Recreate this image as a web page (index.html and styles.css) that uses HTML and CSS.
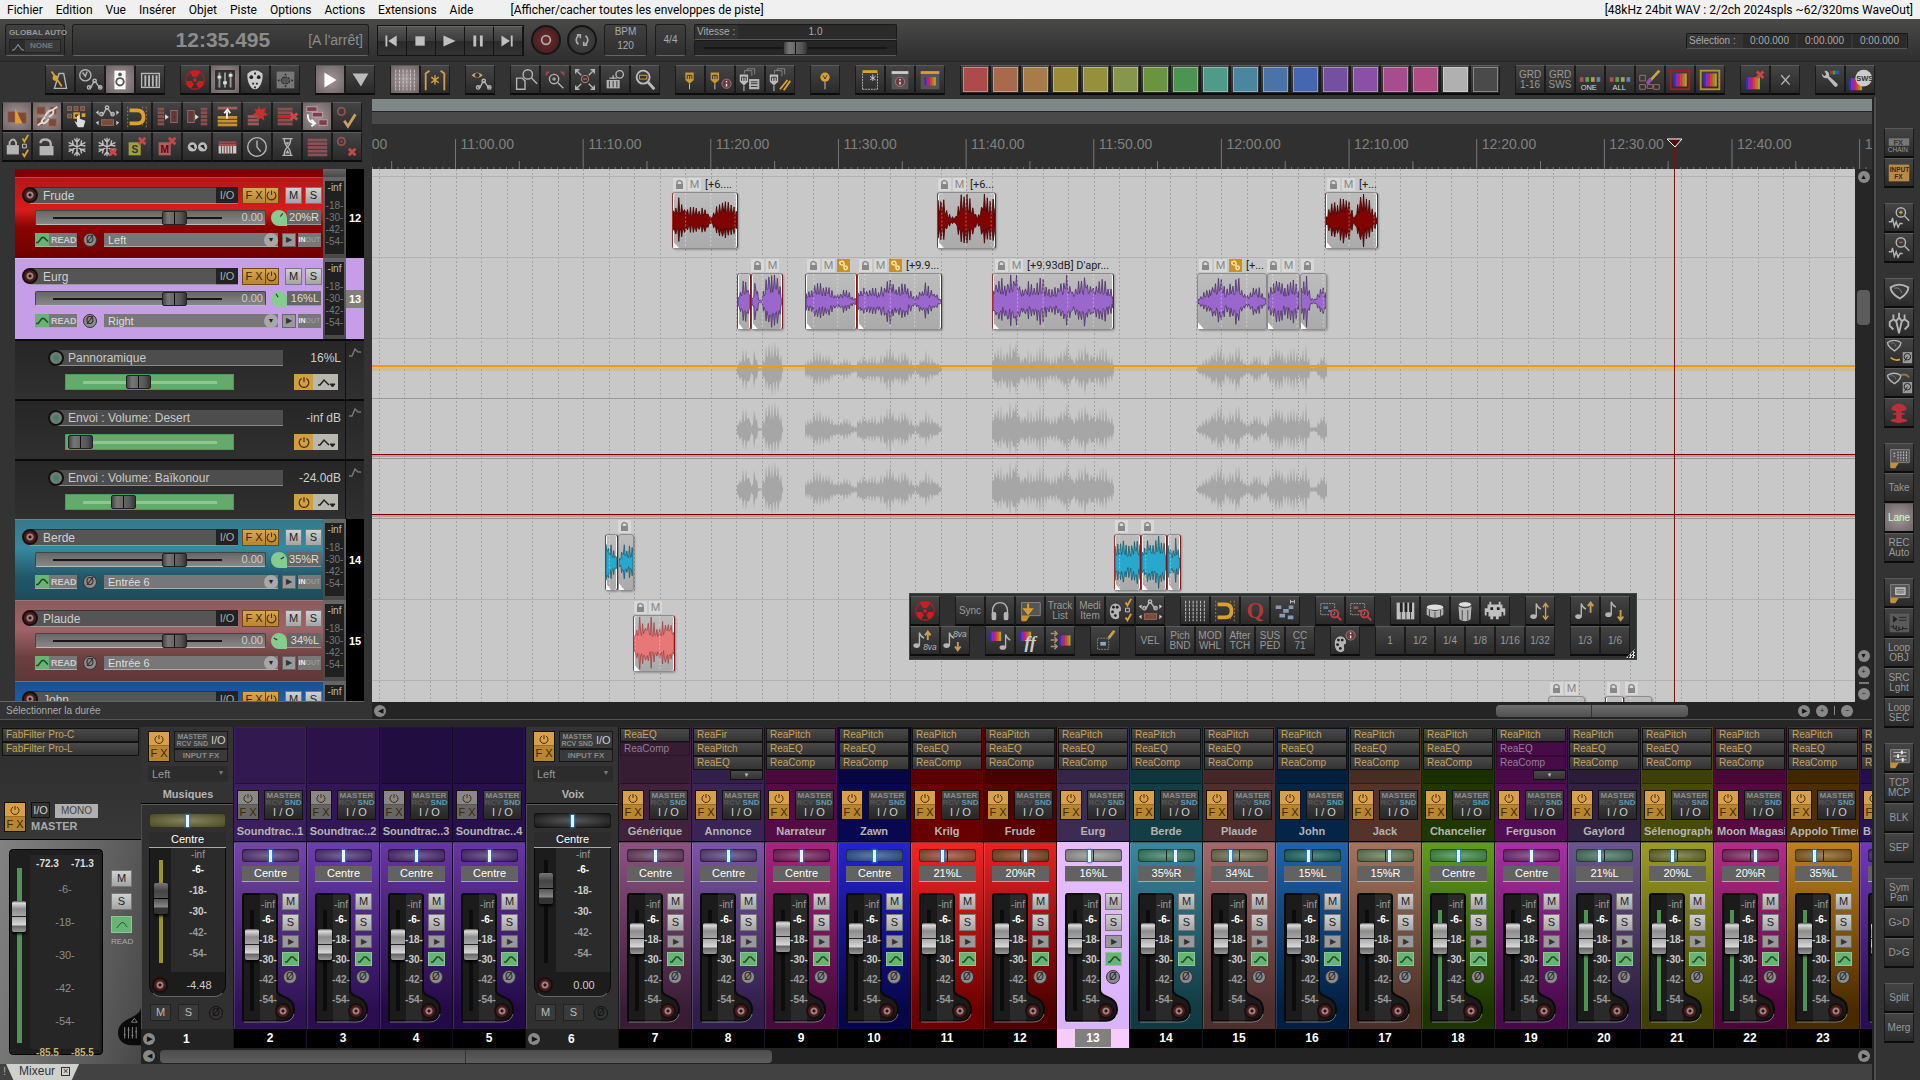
FILE: index.html
```
<!DOCTYPE html>
<html lang="fr">
<head>
    <meta charset="UTF-8">
    <meta name="viewport" content="width=device-width, initial-scale=1.0">
    <link rel="stylesheet" href="styles.css">
    <title>Mixeur</title>
</head>
<body>
    <nav class="menubar">
        <a href="#">Fichier</a>
        <a href="#">Edition</a>
        <a href="#">Vue</a>
        <a href="#">Insérer</a>
        <a href="#">Objet</a>
        <a href="#">Piste</a>
        <a href="#">Options</a>
        <a href="#">Actions</a>
        <a href="#">Extensions</a>
        <a href="#">Aide</a>
        <span class="last-action">[Afficher/cacher toutes les enveloppes de piste]</span>
        <span class="audio-info">[48kHz 24bit WAV : 2/2ch 2024spls ~62/320ms WaveOut]</span>
    </nav>

    <header class="transport">
        <div class="panel global-auto">
            <span>GLOBAL AUTO</span>
            <button class="auto-mode"><svg viewBox="0 0 13 11"><path d="M2 9l2-1 3-4 3 4 2 1" /></svg><span>NONE</span></button>
        </div>
        <div class="panel clock">
            <span class="clock-time">12:35.495</span>
            <span class="clock-state">[A l'arrêt]</span>
        </div>
        <div class="transport-buttons">
            <button aria-label="Début"><svg viewBox="0 0 28 30"><path d="M8 9h2v12H8zM20 9v12l-9-6z" /></svg></button>
            <button aria-label="Stop"><svg viewBox="0 0 28 30"><path d="M9 10h10v10H9z" /></svg></button>
            <button aria-label="Lecture"><svg viewBox="0 0 28 30"><path d="M8 9l13 6-13 6z" /></svg></button>
            <button aria-label="Pause"><svg viewBox="0 0 28 30"><path d="M9 9h3v12H9zM16 9h3v12h-3z" /></svg></button>
            <button aria-label="Fin"><svg viewBox="0 0 28 30"><path d="M18 9h2v12h-2zM8 9v12l9-6z" /></svg></button>
        </div>
        <button class="round record" aria-label="Enregistrer"><svg viewBox="0 0 30 30"><circle cx="15" cy="15" r="5" /></svg></button>
        <button class="round loop" aria-label="Boucle"><svg viewBox="0 0 30 30"><path d="M11 20a6 6 0 0 1 0-10M19 10a6 6 0 0 1 0 10M9 9h4v4M21 21h-4v-4" /></svg></button>
        <div class="panel bpm"><span>BPM</span><span>120</span></div>
        <div class="panel signature">4/4</div>
        <div class="rate">
            <div class="rate-top"><label for="rate">Vitesse :</label><span>1.0</span></div>
            <div class="rate-bottom"><input type="range" id="rate" class="fader-h" min="0" max="100" value="50"></div>
        </div>
        <div class="selection">
            <span>Sélection :</span><b>0:00.000</b><b>0:00.000</b><b>0:00.000</b>
        </div>
    </header>

    <div class="toolbar main-toolbar" id="mainToolbar"></div>

    <div class="workspace">
        <div class="content">
            <section class="upper">
                <div class="track-panel">
                    <div class="toolbar track-toolbar" id="trackToolbar"></div>
                    <div class="track-list" id="trackList"></div>
                    <div class="status">Sélectionner la durée</div>
                </div>
                <div class="arrange">
                    <div class="navigator"></div>
                    <div class="regions"></div>
                    <svg class="ruler" id="ruler"></svg>
                    <div class="arrange-row">
                        <div class="canvas" id="canvas">
                            <svg class="grid-lines" id="gridLines"></svg>
                            <div class="lanes" id="lanes"></div>
                        </div>
                        <div class="vscroll">
                            <button class="dot" aria-label="Haut">▲</button>
                            <div class="vthumb"></div>
                            <button class="dot" aria-label="Bas">▼</button>
                            <button class="dot" aria-label="Zoom vertical plus">+</button>
                            <i></i>
                            <button class="dot" aria-label="Zoom vertical moins">−</button>
                        </div>
                    </div>
                    <div class="hscroll">
                        <button class="dot" aria-label="Gauche">◀</button>
                        <div class="hthumb"></div>
                        <button class="dot" aria-label="Droite">▶</button>
                        <button class="dot" aria-label="Zoom plus">+</button>
                        <i></i>
                        <button class="dot" aria-label="Zoom moins">−</button>
                    </div>
                    <div class="playhead" id="playhead"><svg viewBox="0 0 17 10"><path d="M1 1h15l-7 8z" /></svg></div>
                    <div class="float-toolbar" id="floatToolbar">
                        <div class="toolbar" id="floatRow1"></div>
                        <div class="toolbar" id="floatRow2"></div>
                    </div>
                </div>
            </section>

            <section class="mixer">
                <div class="master">
                    <div class="master-top">
                        <div class="slots">
                            <button class="slot">FabFilter Pro-C</button>
                            <button class="slot">FabFilter Pro-L</button>
                        </div>
                        <div class="master-io">
                            <button class="fx-btn"><svg viewBox="0 0 10 10"><path d="M3 2a4 4 0 1 0 4 0M5 1v4" /></svg><span>F X</span></button>
                            <div>
                                <button class="io">I/O</button><button class="mono">MONO</button>
                                <strong>MASTER</strong>
                            </div>
                        </div>
                    </div>
                    <div class="master-main">
                        <div class="master-meter">
                            <input type="range" class="fader-v master-fader" aria-label="Volume master" value="77">
                            <div class="master-scale">
                                <p><b>-72.3</b><b>-71.3</b></p>
                                <span>-6-</span><span>-18-</span><span>-30-</span><span>-42-</span><span>-54-</span>
                                <p class="low"><b>-85.5</b><b>-85.5</b></p>
                            </div>
                        </div>
                        <div class="master-buttons">
                            <button class="ms">M</button>
                            <button class="ms">S</button>
                            <button class="env-btn" aria-label="Automation"><svg viewBox="0 0 16 12"><path d="M2 10l5-6 3 0 4 5" /></svg></button>
                            <span>READ</span>
                        </div>
                        <svg class="master-knob" viewBox="0 0 24 40"><path d="M24 0C22 12 0 10 0 26c0 8 6 13 14 13h10z" fill="#0b0b0b" /><path d="M7 20v12M11 20v12M15 20v12M19 20v12" stroke="#888" /><path d="M6 28h2M10 23h2M14 29h2M18 25h2M14 15l3-4 3 4z" stroke="#888" /></svg>
                    </div>
                </div>
                <div class="mixer-right">
                    <div class="strips" id="strips"></div>
                    <div class="mixer-scroll">
                        <button class="dot" aria-label="Gauche">◀</button>
                        <div class="mthumb"></div>
                        <button class="dot" aria-label="Droite">▶</button>
                    </div>
                </div>
            </section>

            <footer class="tabs">
                <span>!</span>
                <div class="tab">Mixeur <button aria-label="Fermer">×</button></div>
            </footer>
        </div>
        <aside class="toolbar side-toolbar" id="sideToolbar"></aside>
    </div>
    <script src="script.js"></script>
</body>
</html>
```
FILE: styles.css
```
* {
  box-sizing: border-box;
}
body {
  margin: 0;
  height: 100vh;
  display: flex;
  flex-direction: column;
  overflow: hidden;
  background: #333;
  color: #aaa;
  font: 11px/14px "Liberation Sans", Arial, sans-serif;
}
button, input, select {
  font: inherit;
  color: inherit;
  margin: 0;
  padding: 0;
  border: 0;
  border-radius: 0;
  background: none;
}
svg {
  display: block;
}
p {
  margin: 0;
}

/* menu */
.menubar {
  flex: none;
  height: 19px;
  padding: 0 7px;
  display: flex;
  align-items: center;
  gap: 13px;
  background: #f0f0f0;
  color: #000;
  font: 12px/16px Roboto, sans-serif;
}
.menubar a {
  color: #000;
  text-decoration: none;
}
.last-action {
  margin-left: 24px;
}
.audio-info {
  margin-left: auto;
}

/* transport */
.transport {
  flex: none;
  height: 43px;
  padding: 5px 12px 5px 5px;
  display: flex;
  background: linear-gradient(#4a4a48, #3c3c3c 50%, #2e2e2e);
  border-bottom: 1px solid #262626;
}
.panel {
  height: 32px;
  border: 1px solid #1c1c1c;
  border-bottom-color: #666;
  border-radius: 3px;
  background: linear-gradient(#404040, #2f2f2f);
}
.global-auto {
  width: 60px;
  padding: 2px 3px;
  font: bold 8px/12px "Liberation Sans", sans-serif;
  white-space: nowrap;
  color: #999;
}
.auto-mode {
  display: flex;
  width: 52px;
  height: 14px;
  align-items: center;
  gap: 5px;
  border: 1px solid #222;
  background: #3a3a3a;
  color: #777;
}
.auto-mode svg {
  width: 15px;
  background: #2c2c2c;
  fill: none;
  stroke: #888;
}
.clock {
  width: 297px;
  margin-left: 7px;
  padding-right: 5px;
  display: flex;
  align-items: center;
  justify-content: flex-end;
  gap: 38px;
  color: #8c8c8c;
}
.clock-time {
  font-size: 21px;
  font-weight: bold;
}
.clock-state {
  font-size: 14px;
}
.transport-buttons {
  display: flex;
  margin: 1px 7px 0 8px;
  height: 31px;
  border: 1px solid #141414;
}
.transport-buttons button {
  width: 29px;
  border-right: 1px solid #141414;
  border-top: 1px solid #666;
  background: linear-gradient(#555, #3b3b3b 50%, #2a2a2a 50%, #333);
}
.transport-buttons svg {
  height: 28px;
  fill: #c0c0c0;
}
.round {
  width: 30px;
  height: 30px;
  margin: 1px 6px 0 0;
  border: 2px solid #161616;
  border-radius: 50%;
  background: radial-gradient(#444, #333);
}
.round svg {
  width: 26px;
  fill: none;
  stroke: #aaa;
  stroke-width: 2;
}
.record {
  background: radial-gradient(#6a2c2c, #401a1a);
}
.bpm {
  width: 43px;
  margin-left: 1px;
  text-align: center;
  font-size: 10px;
}
.bpm span {
  display: block;
}
.signature {
  width: 31px;
  margin-left: 8px;
  text-align: center;
  font-size: 10px;
  line-height: 30px;
}
.rate {
  width: 203px;
  margin-left: 8px;
  font-size: 10px;
}
.rate-top, .rate-bottom {
  height: 16px;
  border: 1px solid #1a1a1a;
  border-bottom-color: #5a5a5a;
  border-radius: 2px;
  background: #333;
}
.rate-top {
  display: flex;
  padding-left: 2px;
}
.rate-top label {
  width: 41px;
}
.rate-top span {
  flex: 1;
  padding-right: 3px;
  text-align: center;
  background: #2b2b2b;
}
.rate-bottom {
  padding: 0 9px;
  background: #262626;
}
.selection {
  display: flex;
  align-self: flex-start;
  gap: 2px;
  height: 16px;
  margin: 9px 0 0 auto;
  padding: 0 1px 0 2px;
  border: 1px solid #161616;
  border-bottom-color: #555;
  border-radius: 2px;
  font-size: 10px;
  background: #353535;
}
.selection span {
  width: 52px;
  white-space: nowrap;
}
.selection b {
  width: 53px;
  font-weight: normal;
  text-align: center;
  background: #2b2b2b;
}

/* sliders */
.fader-h, .fader-v, .pan {
  appearance: none;
  display: block;
  outline: none;
}
.fader-h {
  width: 100%;
  height: 14px;
  background: linear-gradient(#161616, #161616) center / 100% 2px no-repeat;
}
.fader-h::-webkit-slider-thumb {
  appearance: none;
  width: 25px;
  height: 14px;
  border: 1px solid #222;
  border-radius: 2px;
  background: linear-gradient(90deg, #0000 11px, #111 11px, #111 12px, #0000 12px), linear-gradient(90deg, #444, #777 5px, #555 18px, #333);
}
.fader-v {
  writing-mode: vertical-lr;
  direction: rtl;
  width: 14px;
  background: linear-gradient(#0c0c0c, #0c0c0c) center / 4px 100% no-repeat;
}
.fader-v.green {
  background-image: linear-gradient(#4d9450, #4d9450);
}
.fader-v.yellow {
  background-image: linear-gradient(#96962c, #96962c);
}
.fader-v::-webkit-slider-thumb {
  appearance: none;
  width: 14px;
  height: 31px;
  border-radius: 2px;
  background: linear-gradient(#0000 15px, #222 15px, #222 16px, #0000 16px), linear-gradient(#555, #ddd 2px, #8c8c8c 8px, #aaa 16px, #d8d8d8 24px, #666 25px, #999);
  box-shadow: 0 2px 3px #000;
}
.pan {
  width: 100%;
  height: 13px;
  border: 1px solid #0006;
  border-radius: 3px;
  background: linear-gradient(#222, #222) center / 1px 100% no-repeat, radial-gradient(#fff4, #0003), var(--pan, #0004);
}
.pan::-webkit-slider-thumb {
  appearance: none;
  width: 3px;
  height: 12px;
  background: #e8f4ff;
  box-shadow: 0 0 2px 1px #2a7ad0;
}

/* icon toolbars */
.toolbar {
  display: flex;
  gap: 15px;
}
.toolbar .group {
  display: flex;
}
.tool {
  width: 30px;
  height: 30px;
  border: 1px solid #1a1a1a;
  border-top-color: #5a5a5a;
  border-bottom: 2px solid #0c0c0c;
  background: linear-gradient(#444, #2a2a2a);
  color: #999;
  font-size: 10px;
  line-height: 10px;
  text-align: center;
  white-space: nowrap;
}
.tool svg {
  width: 28px;
  height: 27px;
  fill: none;
}
.tool.on {
  background: radial-gradient(#a39a9a, #6e6264);
}
.tool.lit {
  color: #c8ffc8;
}
.swatch {
  display: block;
  width: 25px;
  height: 25px;
  margin: auto;
  border: 1px solid #fff5;
}
.main-toolbar {
  flex: none;
  height: 35px;
  padding: 3px 0 0 45px;
}
.side-toolbar {
  flex: none;
  width: 46px;
  padding: 31px 0 0 8px;
  flex-direction: column;
  border-left: 2px solid #4a4f4f;
}
.side-toolbar .group {
  flex-direction: column;
}
.track-toolbar {
  height: 72px;
  padding: 5px 0 0 2px;
  flex-direction: column;
  gap: 0;
}

/* general layout */
.workspace {
  flex: 1;
  display: flex;
  min-height: 0;
}
.content {
  flex: 1;
  min-width: 0;
  display: flex;
  flex-direction: column;
  border-right: 2px solid #222;
}
.upper {
  flex: 1;
  min-height: 0;
  display: flex;
  border-bottom: 1px solid #555;
}
.track-panel {
  flex: none;
  width: 364px;
  display: flex;
  flex-direction: column;
}
.track-list {
  flex: 1;
  overflow: hidden;
  margin-left: 15px;
}
.status {
  height: 18px;
  padding: 1px 6px;
  border-top: 1px solid #666;
  font-size: 10px;
  line-height: 15px;
}

/* tracks */
.track {
  display: flex;
  height: 81px;
}
.track.cut {
  height: 8px;
}
.track-body {
  width: 308px;
  padding: 9px 0 0 20px;
  border-top: 1px solid #fff5;
}
.cut .track-body {
  padding: 0;
  border: 0;
}
.row {
  display: flex;
  height: 15px;
}
.row1 {
  height: 17px;
  margin-left: -13px;
}
.row2 {
  margin-top: 6px;
}
.row3 {
  height: 14px;
  margin-top: 8px;
}
.rec {
  width: 16px;
  height: 16px;
  flex: none;
  border: 2px solid #1a0e0e;
  border-radius: 50%;
  background: radial-gradient(#2a1414 1px, #a08080 2px, #a08080 3px, #4a1c1c 4px);
}
.row1 .rec {
  margin-right: -8px;
  z-index: 1;
}
.track-name {
  width: 186px;
  padding-left: 13px;
  border-top: 1px solid #333;
  border-bottom: 1px solid #999;
  background: #555;
  color: #d0d0d0;
  font-size: 12px;
}
.track-io {
  width: 22px;
  border-bottom: 1px solid #888;
  background: #222;
}
.track-fx {
  display: flex;
  width: 37px;
  margin: 0 6px 0 4px;
  border: 1px solid #6a4a1a;
  background: linear-gradient(#d8a850, #b8862c);
  color: #3a2400;
}
.track-fx span {
  width: 23px;
  border-right: 1px solid #6a4a1a;
}
.track-fx svg {
  width: 11px;
  height: 12px;
  margin-top: 1px;
}
.track-fx svg, .fx-btn svg, .env-power svg {
  fill: none;
  stroke: #4a2c00;
}
.ms {
  width: 17px;
  height: 17px;
  border: 1px solid #777;
  background: linear-gradient(#d0d0d0, #a4a4a4);
  color: #222;
  font-size: 11px;
  line-height: 15px;
}
.row1 .ms + .ms {
  margin-left: 3px;
}
.track-fader {
  display: flex;
  width: 231px;
  padding: 0 2px 0 17px;
  border: 1px solid #444;
  border-bottom-color: #bbb;
  border-radius: 2px;
  background: linear-gradient(#666, #888);
  color: #ccc;
}
.track-fader .fader-h {
  width: 169px;
}
.track-fader span {
  margin-left: auto;
  line-height: 13px;
}
.pan-knob {
  width: 16px;
  height: 16px;
  flex: none;
  margin-left: 5px;
  border-radius: 50% 50% 0 50%;
  background: #86cc8e;
}
.pan-knob svg {
  width: 16px;
  stroke: #225;
}
.pan-value {
  flex: 1;
  margin-right: 2px;
  padding-right: 2px;
  border-bottom: 1px solid #999;
  text-align: right;
  background: #666;
  color: #ddd;
}
.read {
  display: flex;
  width: 42px;
  background: #777;
  color: #ccc;
  font: bold 9px/14px "Liberation Sans", sans-serif;
  border-bottom: 1px solid #aaa;
}
.read svg, .env-btn svg {
  width: 14px;
  height: 13px;
  margin-right: 2px;
  background: #68b474;
  fill: none;
  stroke: #1e4a26;
}
.phase {
  width: 14px;
  height: 14px;
  border: 1px solid #333;
  border-radius: 50%;
  background: #8c8c8c;
  color: #222;
  font-size: 10px;
  line-height: 12px;
}
.row3 .phase {
  margin: 0 7px 0 6px;
}
.input-select {
  appearance: none;
  width: 174px;
  padding: 0 4px;
  border-bottom: 1px solid #aaa;
  background: #777;
  color: #ddd;
}
.select-wrap {
  display: flex;
}
.select-wrap::after {
  content: "▼";
  flex: none;
  width: 14px;
  height: 14px;
  margin-left: -14px;
  border-radius: 50%;
  background: #a8a8a8;
  color: #222;
  font-size: 7px;
  text-align: center;
  pointer-events: none;
  z-index: 1;
}
.monitor {
  width: 14px;
  margin: 0 2px 0 4px;
  border: 1px solid #666;
  background: #999;
  color: #333;
  font-size: 8px;
  line-height: 12px;
}
.inout {
  width: 23px;
  background: #777;
  color: #eee;
  font: bold 7px/14px "Liberation Sans", sans-serif;
}
.inout i {
  font-style: normal;
  color: #999;
}
.track-meter {
  width: 23px;
  padding: 4px 2px;
  background: linear-gradient(#666, #484848);
}
.track-meter div {
  height: 73px;
  padding-top: 1px;
  background: #202020;
  font-size: 10px;
  line-height: 12px;
  text-align: center;
  color: #777;
  white-space: nowrap;
}
.track-meter span {
  display: block;
}
.track-meter span:first-child {
  margin-bottom: 6px;
  color: #bbb;
}
.cut .track-meter {
  padding: 0;
}
.track-num {
  flex: 1;
  display: flex;
  align-items: center;
  background: #000;
  color: #fff;
}
.track-num b {
  width: 100%;
  padding: 2px 0;
  text-align: center;
}
.selected .track-num {
  background: #c69ee8;
}
.selected .track-num b {
  background: #808078;
}

/* envelope panels */
.envelope {
  display: flex;
  height: 60px;
  border-top: 2px solid #0a0a0a;
  background: linear-gradient(#262626, #303030);
}
.env-body {
  width: 331px;
  padding: 9px 4px 0 33px;
  border-right: 1px solid #111;
}
.env-top, .env-bottom {
  display: flex;
  height: 16px;
}
.env-top .rec {
  margin-right: -8px;
  z-index: 1;
  border-color: #111;
  background: radial-gradient(#666 1px, #3f8a6a 2px, #3f8a6a 3px, #777 4px);
}
.env-name {
  width: 227px;
  padding-left: 12px;
  background: #4d4d4d;
  border-bottom: 1px solid #888;
  color: #c8c8c8;
  font-size: 12px;
}
.env-top span {
  margin-left: auto;
  font-size: 12px;
  line-height: 16px;
  white-space: nowrap;
  color: #ccc;
}
.env-bottom {
  margin-top: 8px;
  padding-left: 17px;
}
.env-slider {
  width: 169px;
  padding: 0 2px;
  border: 1px solid #4c9a58;
  background: #64aa6a;
}
.env-slider .fader-h {
  background: linear-gradient(#8cc890, #8cc890) center / 134px 3px no-repeat;
}
.env-power {
  width: 19px;
  margin-left: 60px;
  background: #d0a040;
}
.env-power svg {
  width: 12px;
  margin: auto;
}
.env-shape {
  width: 25px;
  background: #b8b8b0;
}
.env-shape svg, .env-side svg {
  fill: none;
  stroke: #222;
}
.env-side {
  padding: 5px 2px;
}
.env-side svg {
  width: 14px;
  stroke: #777;
}

/* arrange */
.arrange {
  flex: 1;
  min-width: 0;
  margin-left: 8px;
  padding-top: 2px;
  position: relative;
  display: flex;
  flex-direction: column;
}
.navigator {
  height: 12px;
  background: #7f8888;
}
.regions {
  height: 13px;
  border-top: 1px solid #222;
  background: #494949;
}
.ruler {
  width: 100%;
  height: 45px;
  background: #303030;
  fill: #808080;
  font-size: 14px;
}
.arrange-row {
  flex: 1;
  min-height: 0;
  display: flex;
}
.canvas {
  flex: 1;
  position: relative;
  overflow: hidden;
  background: #c8c8c8;
}
.grid-lines {
  position: absolute;
  width: 100%;
  height: 100%;
  stroke: #a2a2a2;
  stroke-dasharray: 2 2;
}
.lane {
  position: relative;
  height: 81px;
  border-bottom: 1px solid #b2b2b2;
}
.lane.cut {
  height: 8px;
}
.lane.env {
  height: 60px;
  border-color: #999;
}
.clip {
  position: absolute;
  top: 15px;
  height: 57px;
  border: 1px solid #8c8c8c;
  border-radius: 3px;
  background: linear-gradient(#bdbdbd, #aaa);
  box-shadow: 1px 1px 2px #0004;
}
.clip svg, .ghost svg {
  width: 100%;
  height: 100%;
}
.clip.fade {
  border-left-color: #9c3030;
  border-right-color: #8c1414;
  box-shadow: inset 1px 0 #fff, inset -1px 0 #fff, 1px 1px 2px #0004;
}
.clip-label {
  position: absolute;
  top: 1px;
  display: flex;
  gap: 2px;
  height: 14px;
  color: #222;
  font: 11px/14px Roboto, sans-serif;
  white-space: nowrap;
}
.clip-label i {
  width: 13px;
  height: 13px;
  background: #d8d8d8;
  color: #888;
  font-style: normal;
  text-align: center;
}
.clip-label i.link {
  background: #c89028;
  color: #ffe8a0;
}
.clip-label svg {
  width: 13px;
}
.clip-label span {
  margin-left: 2px;
}
.ghost {
  position: absolute;
  top: 1px;
  height: 59px;
}
.env-line {
  position: absolute;
  left: 0;
  right: 0;
}
.env-line.orange {
  top: 26px;
  height: 6px;
  border-top: 2px solid #f09a10;
  background: #f0981044;
}
.env-line.red {
  top: 55px;
  height: 3px;
  border-top: 1px solid #780000;
  background: #a0202044;
}
.playhead {
  position: absolute;
  top: 41px;
  bottom: 17px;
  left: 1294px;
  width: 17px;
}
.playhead::after {
  content: "";
  display: block;
  width: 1px;
  height: 100%;
  margin: 0 auto;
  background: #7a1010;
}
.playhead svg {
  height: 10px;
  fill: #501010;
  stroke: #fff;
  margin-bottom: -10px;
}
.float-toolbar {
  position: absolute;
  left: 537px;
  bottom: 59px;
  width: 728px;
  height: 67px;
  padding: 2px 0 0;
  border: 1px solid #3c4644;
  background: #303030;
}
.float-toolbar::after {
  content: "";
  position: absolute;
  right: 1px;
  bottom: 1px;
  width: 9px;
  height: 9px;
  background: repeating-conic-gradient(#ddd 0 25%, #303030 0 50%) 0 0 / 3px 3px;
  clip-path: polygon(100% 0, 100% 100%, 0 100%);
}
.vscroll {
  width: 17px;
  padding: 2px 0;
  display: flex;
  flex-direction: column;
  align-items: center;
  gap: 4px;
  background: #262626;
}
.vthumb {
  width: 13px;
  height: 35px;
  margin: 103px 0 auto;
  border-radius: 4px;
  background: #5c5c5c;
}
.vscroll i {
  width: 10px;
  height: 2px;
  background: #777;
}
.dot {
  flex: none;
  width: 12px;
  height: 12px;
  border-radius: 50%;
  background: #888;
  color: #111;
  font-size: 7px;
  line-height: 12px;
  text-align: center;
}
.hscroll {
  height: 17px;
  padding: 0 19px 0 2px;
  display: flex;
  align-items: center;
  gap: 6px;
  background: #242424;
}
.hthumb {
  width: 192px;
  height: 12px;
  margin: 0 auto 0 1104px;
  border-radius: 4px;
  background: linear-gradient(90deg, #0000 95px, #333 95px, #333 96px, #0000 96px), linear-gradient(#6e6e6e, #505050);
}
.hscroll i {
  width: 1px;
  height: 9px;
  background: #888;
}

/* mixer */
.mixer {
  flex: none;
  padding-top: 7px;
  display: flex;
  overflow: hidden;
  background: #262626;
}
.master {
  flex: none;
  width: 141px;
  height: 337px;
}
.master-top {
  height: 113px;
  padding: 1px 2px;
  border-bottom: 1px solid #000;
  background: linear-gradient(#2c2c2c, #383838);
}
.slots {
  height: 57px;
}
.slot {
  display: block;
  width: 100%;
  height: 14px;
  padding-left: 3px;
  border: 1px solid #111;
  background: linear-gradient(#4a4a4a, #333);
  color: #c8a060;
  font-size: 10px;
  line-height: 12px;
  text-align: left;
}
.slot.off {
  background: none;
  border-color: #0004;
  color: #8f8090;
}
.slot.more {
  width: 33px;
  margin-left: auto;
  padding: 0;
  height: 10px;
  text-align: center;
  font-size: 6px;
  line-height: 8px;
  color: #bbb;
}
.master-io {
  display: flex;
  gap: 5px;
  padding: 17px 0 0 2px;
}
.master-io strong {
  display: block;
  line-height: 16px;
}
.fx-btn {
  flex: none;
  width: 22px;
  height: 30px;
  border: 1px solid #1a1208;
  background: linear-gradient(#d8a048 13px, #7a5518 13px, #b8862c 14px);
  color: #402800;
  line-height: 14px;
}
.fx-btn svg {
  width: 10px;
  margin: 1px auto 2px;
}
.fx-btn span, .io-box b {
  display: block;
}
.fx-btn.off {
  background: linear-gradient(#888 13px, #444 13px, #666 14px);
}
.io {
  width: 19px;
  height: 16px;
  border: 1px solid #111;
  background: #333;
  color: #ccc;
}
.mono {
  width: 43px;
  height: 14px;
  margin-left: 5px;
  background: #b0b0b0;
  color: #444;
  font-size: 10px;
}
.master-main {
  position: relative;
  display: flex;
  height: 224px;
  padding: 9px;
  gap: 8px;
  background: linear-gradient(100deg, #828282, #5c5c5c 70%, #484848);
}
.master-meter {
  display: flex;
  width: 94px;
  height: 206px;
  padding: 5px 2px;
  gap: 4px;
  border: 1px solid #000;
  border-radius: 4px;
  background: #1e1e1e;
}
.master-fader {
  height: 175px;
  margin-top: 13px;
  background: linear-gradient(#4f9454, #4f9454) center / 5px 100% no-repeat;
}
.master-scale {
  flex: 1;
  text-align: center;
  line-height: 33px;
  background: #262626;
  color: #8c8c8c;
}
.master-scale span {
  display: block;
}
.master-scale p {
  display: flex;
  justify-content: space-around;
  height: 18px;
  line-height: 18px;
  font-size: 10px;
  color: #ddd;
}
.master-scale .low {
  margin-top: 6px;
  color: #c8b070;
}
.master-buttons {
  margin-top: 21px;
  width: 21px;
  font-size: 9px;
}
.master-buttons button {
  display: block;
  width: 21px;
  height: 17px;
  margin-bottom: 6px;
}
.master-buttons .env-btn {
  margin-bottom: 1px;
}
.master-buttons span {
  font-size: 8px;
}
.master-knob {
  position: absolute;
  right: 0;
  bottom: 17px;
  width: 23px;
  height: 40px;
}
.env-btn {
  border: 1px solid #8ac890;
  background: #68b474;
}
.env-btn svg {
  margin: auto;
}
.mixer-right {
  flex: 1;
  min-width: 0;
}
.strips {
  display: flex;
  overflow: hidden;
}
.strip {
  flex: none;
  width: 73px;
  height: 321px;
  border-right: 1px solid #0008;
  background: var(--head);
}
.strip-head {
  height: 115px;
  padding: 1px 1px 0;
  border-bottom: 1px solid #000;
}
.strip .slots {
  height: 56px;
  border-bottom: 1px solid #0005;
  background: #0002;
}
.strip-io {
  display: flex;
  gap: 5px;
  padding: 6px 1px 4px 2px;
}
.io-box {
  width: 39px;
  height: 30px;
  border: 1px solid #111;
  background: linear-gradient(#4a4a4a, #262626);
  color: #ccc;
  font-size: 11px;
  line-height: 13px;
}
.io-box b {
  font-size: 8px;
  line-height: 7px;
  color: #8c8c8c;
}
.io-box b + b {
  color: #5c9ab8;
}
.io-box b i {
  font-style: normal;
  color: #555;
}
.strip-name {
  overflow: hidden;
  white-space: nowrap;
  text-align: center;
  font-weight: bold;
  color: #b4b4b4;
}
.strip-name.long {
  text-align: left;
  padding-left: 2px;
}
.strip-main {
  height: 187px;
  padding: 6px 7px 0;
  border-top: 1px solid #fff3;
  border-left: 1px solid #fff2;
  background: var(--main);
}
.pan-label {
  height: 16px;
  margin: 4px 0 11px;
  border-bottom: 1px solid #aaa;
  background: #626262;
  color: #fff;
  text-align: center;
}
.strip-body {
  position: relative;
  display: flex;
}
.fader-shape {
  position: absolute;
  left: 0;
  top: 0;
  width: 54px;
  height: 130px;
}
.strip-body .fader-v {
  position: relative;
  height: 101px;
  margin: 17px 1px 0 3px;
}
.scale {
  position: relative;
  width: 16px;
  height: 129px;
  padding-top: 5px;
  background: #fff1;
  font-size: 10px;
  font-weight: bold;
  line-height: 20px;
}
.scale span {
  display: flex;
  justify-content: center;
  color: #9a9a9a;
}
.scale span:first-child {
  height: 12px;
  line-height: 14px;
  font-weight: normal;
}
.scale span:nth-child(2) {
  color: #fff;
}
.scale span:nth-child(3), .scale span:nth-child(4) {
  color: #ccc;
}
.strip-buttons {
  position: relative;
  width: 17px;
  margin-left: 6px;
}
.strip-buttons button {
  display: block;
  margin-bottom: 4px;
}
.strip-buttons .monitor {
  width: 17px;
  height: 13px;
  margin: 0 0 4px;
}
.strip-buttons .env-btn {
  width: 17px;
  height: 14px;
}
.strip-buttons .env-btn svg {
  height: 12px;
}
.strip-buttons .phase {
  margin-left: 1px;
}
.strip-buttons .rec {
  margin: 19px 0 0 -7px;
}
.strip-num {
  height: 19px;
  background: #000;
  color: #fff;
  font-weight: bold;
  font-size: 12px;
  line-height: 18px;
  text-align: center;
}
.strip.selected .strip-num {
  padding: 0 18px;
  background: #f6ccfc;
}
.strip.selected .strip-num span {
  display: block;
  background: #80807c;
}

/* folder strips */
.strip.folder {
  width: 93px;
}
.folder .strip-head {
  height: 77px;
  padding: 4px 5px 0 7px;
}
.folder .strip-io {
  padding: 0;
  gap: 4px;
}
.folder .fx-btn {
  height: 31px;
}
.folder-io {
  flex: 1;
}
.folder-io button {
  display: flex;
  align-items: center;
  justify-content: space-around;
  width: 100%;
  height: 18px;
  border: 1px solid #181818;
  background: #3a3a3a;
  color: #ccc;
}
.folder-io small {
  font: bold 7px/7px "Liberation Sans", sans-serif;
  color: #8c8c8c;
}
.folder-io .input-fx {
  height: 13px;
  font-size: 8px;
  font-weight: bold;
  color: #888;
}
.folder .input-select {
  width: 82px;
  height: 16px;
  background: #2c2c2c;
  border: 0;
  color: #999;
}
.folder .select-wrap {
  margin: 4px 0 5px;
}
.folder .select-wrap::after {
  background: none;
  color: #777;
}
.folder .strip-main {
  height: 225px;
  padding: 8px 7px 0;
  background: #303030;
}
.folder .pan {
  height: 15px;
}
.folder .pan-label {
  margin: 4px 0 0;
  background: #2c2c2c;
}
.folder-box {
  display: grid;
  grid-template-columns: 20px 56px;
  height: 149px;
  padding-left: 1px;
  border: 1px solid #0a0a0a;
  border-top: 0;
  border-bottom-color: #666;
  border-radius: 0 0 12px 12px;
  background: #1c1c1c;
}
.folder-box .fader-v {
  height: 103px;
  margin: 12px 3px 0;
}
.folder-box .fader-v::-webkit-slider-thumb {
  background: linear-gradient(#0000 15px, #000 15px, #000 16px, #0000 16px), linear-gradient(#777, #444 8px, #555 16px, #888 24px, #333 25px);
}
.folder .scale {
  width: 54px;
  height: 124px;
  padding: 0;
  line-height: 21px;
}
.folder .scale span:first-child {
  height: 11px;
}
.folder-box .rec {
  margin: 5px 1px;
}
.folder-box em {
  font-style: normal;
  text-align: center;
  line-height: 26px;
  color: #ccc;
}
.folder-buttons {
  display: flex;
  gap: 7px;
  padding: 7px 0 0 1px;
}
.folder-buttons .ms {
  width: 21px;
  background: #3a3a3a;
  border-color: #222;
  color: #bbb;
}
.folder-buttons .phase {
  margin: 2px 0 0 3px;
  background: #333;
  border-color: #111;
  color: #111;
}
.folder .strip-num {
  display: flex;
  align-items: center;
  gap: 28px;
  padding-left: 2px;
  background: #222;
}
.mixer-scroll {
  height: 16px;
  padding: 0 2px;
  display: flex;
  align-items: center;
  gap: 5px;
  background: #232323;
}
.mthumb {
  width: 612px;
  height: 13px;
  margin-right: auto;
  border-radius: 4px;
  background: linear-gradient(90deg, #0000 305px, #333 305px, #333 306px, #0000 306px), linear-gradient(#4c4c4c, #5e5e5e);
}
.tabs {
  flex: none;
  height: 16px;
  display: flex;
  padding-left: 3px;
  background: #424242;
}
.tab {
  display: flex;
  gap: 6px;
  padding: 0 9px 0 13px;
  clip-path: polygon(0 0, 100% 0, 90% 100%, 10% 100%);
  background: #d0d0cc;
  color: #333;
  font-size: 12px;
}
.tab button {
  width: 9px;
  height: 9px;
  margin-top: 3px;
  border: 1px solid #333;
  font-size: 9px;
  line-height: 7px;
}
```
FILE: script.js
```
// ---------- icons, drawn on a 30x30 box ----------
const G = 'stroke="#b4b4b4" stroke-width="1.5"';
const GF = 'fill="#b4b4b4"';
const O = 'stroke="#dda030" stroke-width="2"';
const OF = 'fill="#dda030"';
const R = 'stroke="#b84848" stroke-width="2"';
const BR = 'fill="#7a4a3a" stroke="#9a6a58"';
const cross = (x, y) => `<path d="M${x} ${y}l7 7m0-7l-7 7" stroke="#c84848" stroke-width="3"/>`;
const info = (x, y) => `<circle cx="${x}" cy="${y}" r="5" fill="#6a3c40" stroke="#a07878"/><path d="M${x} ${y - 3}v1.500M${x} ${y}v3" stroke="#eee" stroke-width="1.500"/>`;
const rainbow = (x, y, w, h) => ['#3030c0', '#8030c0', '#c02080', '#d04040', '#c07020', '#b0a030']
  .map((c, i) => `<rect x="${x + i * w / 6}" y="${y}" width="${w / 6 + 0.3}" height="${h}" fill="${c}"/>`).join('');
const lens = (x, y, c) => `<circle cx="${x}" cy="${y}" r="5" ${G}/><path d="M${x + 4} ${y + 4}l6 6" ${G}/>` +
  (c ? `<path d="M${x - 2} ${y}h4M${x} ${y - 2}v4" stroke="${c}"/>` : '');
const stripes = (x, y, w, n, c) => Array.from({ length: n }, (_, i) =>
  `<rect x="${x}" y="${y + i * 4}" width="${w}" height="3" fill="${c}"/>`).join('');
const nodes = (x, y) => `<path d="M${x + 1} ${y + 8}h2l3-6h2l4 6h2" ${G}/><circle cx="${x + 1}" cy="${y + 8}" r="1.800" ${G}/><circle cx="${x + 7}" cy="${y + 1}" r="1.800" ${G}/><circle cx="${x + 13}" cy="${y + 8}" r="1.800" ${G}/>`;
const note = (x, y) => `<ellipse cx="${x}" cy="${y + 14}" rx="3.500" ry="2.500" ${GF}/><path d="M${x + 3} ${y + 14}V${y}q1 4 5 6" ${G}/>`;
const marker = (x, y, c) => `<path d="M${x} ${y}h9v8l-4.500 4-4.500-4z" fill="${c}"/><path d="M${x + 2} ${y + 7}v-4h5v4m-2.500-4v4" stroke="#333"/><path d="M${x + 4.5} ${y + 12}v6" stroke="#ccc"/>`;
const snow = '<path d="M14 5v20M5 10l18 10M23 10L5 20M11 6l3 4 3-4M11 24l3-4 3 4M5 14l5-1-1-5M23 14l-5-1 1-5M5 17l5 1-1 4M23 17l-5 1 1 4" stroke="#c0c0c0" stroke-width="1.500"/>';
const palette = (x, y) => `<path d="M${x + 6} ${y}q7 1 6 8-3 0-2 4 1 5-4 5-6-1-6-9 0-7 6-8z" ${GF}/><g fill="#222"><circle cx="${x + 4}" cy="${y + 4}" r="1.500"/><circle cx="${x + 8}" cy="${y + 4}" r="1.500"/><circle cx="${x + 3}" cy="${y + 9}" r="1.500"/><circle cx="${x + 6}" cy="${y + 13}" r="1.500"/></g>`;
const checks = (x) => `<path d="M${x} 6l2 3 4-7M${x} 22l2 3 4-7" ${O}/><path d="M${x} 12h4v4h-4z" stroke="#ccc"/>`;
const pick = '<path d="M5 9q9-6 19 0 0 6-9 12Q5 15 5 9z" stroke="#b4b4b4" stroke-width="2"/><path d="M9 10q6-2 8 5" stroke="#888"/>';
const disk = '<rect x="18" y="14" width="10" height="12" fill="#999"/><circle cx="23" cy="19" r="3.500" stroke="#222"/><path d="M23 19l-3 5" stroke="#222"/>';
const dashes = (n, h) => Array.from({ length: n }, (_, i) => `<path d="M${4 + i * 4} 4v${h}" stroke="#ccc" stroke-dasharray="3 1"/>`).join('');
const sheet = '<path d="M5 6h20v14H13l-4 5H5z" fill="#555" stroke="#888"/><path d="M5 20h9l-4 6H5z" fill="#c89030"/>';
const radiation = '<circle cx="14" cy="15" r="10" stroke="#b01c1c" stroke-width="1.500"/><g fill="#c82020"><path d="M12 12L8 6q6-3 12 0l-4 6q-2-1-4 0zM11 16H5q0 6 5 8l3-5q-2-1-2-3zM17 16h6q0 6-5 8l-3-5q2-1 2-3z"/></g><circle cx="14" cy="15" r="2" fill="#c82020"/>';
const magnet = '<path d="M6 8h8q7 0 7 7t-7 7H6" stroke="#dda030" stroke-width="4"/><path d="M4 4v22M20 4v4M20 22v4M24 4v22" stroke="#b08030" stroke-dasharray="2 2"/>';
const wrench = '<path d="M5 8q1 6 6 5l8 9q4 1 3-3l-9-8q1-6-5-6l2 4-2 2z" fill="#bbb"/>';

const icons = {
  metronome: `<path d="M8 24h13l-3-16h-5z" ${G}/><path d="M5 6l11 16" ${O}/><circle cx="9" cy="13" r="3" ${OF}/>`,
  clockenv: `<circle cx="9" cy="10" r="6" ${G}/><path d="M6 7l3 4 2-5" ${G}/>${nodes(12, 15)}`,
  speaker: `<rect x="8" y="5" width="12" height="20" fill="#fff"/><circle cx="14" cy="17" r="5" fill="#555"/><circle cx="14" cy="17" r="3" fill="#fff"/><circle cx="14" cy="9" r="2" fill="#555"/>`,
  keyboard: `<rect x="5" y="8" width="19" height="15" ${G}/><path d="M9 10v12M13 10v12M17 10v12M21 10v12" stroke="#bbb" stroke-width="2"/>`,
  radiation,
  mixer: `<rect x="4" y="5" width="20" height="20" fill="#333" stroke="#222"/><path d="M8 7v16M14 7v16M20 7v16" stroke="#999" stroke-width="2"/><path d="M6 12h4M12 18h4M18 10h4" stroke="#ddd" stroke-width="3"/>`,
  mask: `<path d="M6 8q8-7 16 0 1 9-4 15-4 4-8 0-5-6-4-15z" fill="#ccc"/><g fill="#222"><circle cx="10" cy="12" r="2"/><circle cx="18" cy="12" r="2"/><path d="M11 18h2v2h-2zM15 18h2v2h-2zM13 22h2v2h-2zM13 7h2v2h-2z"/></g>`,
  screen: `<rect x="5" y="6" width="19" height="18" fill="#777"/><rect x="10" y="12" width="9" height="7" rx="3" fill="#555" stroke="#222" stroke-dasharray="3 1"/><path d="M13 10l1.500-2 1.500 2zM13 21l1.500 2 1.500-2zM8 14l-2 1.500 2 1.500zM21 14l2 1.500-2 1.500z" fill="#222"/>`,
  play: '<path d="M8 7l13 8-13 8z" fill="#fff"/>',
  down: '<path d="M6 8h17l-8 14z" fill="#bbb"/>',
  grid: dashes(6, 22),
  star: '<path d="M4 26V8l4-3M24 26V8l-4-3" stroke="#c8a050" stroke-width="2"/><path d="M14 10v10M10 12l8 6M18 12l-8 6" stroke="#dda030" stroke-width="1.500"/>',
  eye: `<path d="M5 10q6-6 12 0-6 6-12 0z" fill="#c8a870"/><circle cx="11" cy="10" r="2.500" fill="#333"/>${nodes(11, 15)}`,
  docsearch: `<path d="M5 13h6l3 3v9H5z" ${G}/>${lens(17, 9)}`,
  zoomsel: `<path d="M4 6h5l-5 5zM24 6h-5l5 5z" fill="#a04848"/>${lens(13, 14, '#ccc')}`,
  zoomall: `<path d="M4 4l6 6M24 4l-6 6M4 25l6-6M24 25l-6-6M4 8V4h4M20 4h4v4M4 21v4h4M20 25h4v-4" ${G}/><circle cx="14" cy="14" r="4" stroke="#c08080"/><path d="M12 14h4" ${R}/>`,
  zoomrec: `<rect x="5" y="15" width="14" height="9" ${GF}/><path d="M8 16v7M12 16v7M16 16v7" stroke="#333"/><circle cx="19" cy="9" r="4" ${G}/><path d="M8 13h8M12 10v4" ${G}/>`,
  zoomitem: `<circle cx="12" cy="12" r="7" stroke="#bbb" stroke-width="2"/><path d="M17 17l7 8" stroke="#bbb" stroke-width="3"/><rect x="8" y="10" width="8" height="4" fill="#333" stroke="#dda030"/>`,
  marker: marker(9, 7, '#c89830'),
  markerinfo: marker(4, 7, '#c89830') + info(21, 19),
  markerlist: `<path d="M8 8V5h8v6M11 5V3h8v6" stroke="#888"/>${marker(3, 9, '#bbb')}<rect x="13" y="14" width="11" height="11" ${GF}/><path d="M15 17h7M15 19h7M15 22h7" stroke="#333"/>`,
  markeredit: `<path d="M8 8V5h8v6M11 5V3h8v6" stroke="#888"/>${marker(3, 9, '#bbb')}<path d="M14 25l8-10M18 26l7-10" ${O}/>`,
  vmarker: `<circle cx="14" cy="12" r="5" ${OF}/><path d="M12 10l2 4 2-4" stroke="#333"/><path d="M14 17v8" stroke="#ccc"/>`,
  region: '<path d="M6 6h16" stroke="#dda030" stroke-width="3"/><path d="M6 8v17M22 8v17M6 25h16" stroke="#bbb" stroke-dasharray="2 1"/><path d="M17 9v7M14 11l6 4M20 11l-6 4" stroke="#ccc"/>',
  regioninfo: `<rect x="5" y="8" width="18" height="17" fill="#555"/><path d="M5 7h18" stroke="#ccc" stroke-width="3"/>${info(14, 17)}`,
  regioncolor: `<rect x="4" y="8" width="20" height="17" fill="#555"/><path d="M4 7h20" stroke="#dda030" stroke-width="3"/>${rainbow(8, 12, 12, 9)}`,
  brush: `<path d="M3 10h6v6H3zM18 20h6v5h-6zM3 20h6v5H3zM11 20h6v4h-6z" stroke="#a07070"/><path d="M14 16L24 5" stroke="#c8a050" stroke-width="3"/><path d="M11 19l4-5" stroke="#9050b0" stroke-width="4"/>`,
  rainred: `<rect x="4" y="5" width="20" height="20" stroke="#a02020" stroke-width="2"/>${rainbow(7, 8, 14, 14)}`,
  rainyel: `<rect x="4" y="5" width="20" height="20" stroke="#b89030" stroke-width="2"/>${rainbow(7, 8, 14, 14)}`,
  rainx: rainbow(4, 12, 15, 13) + cross(16, 6),
  x: `<path d="M10 10l9 10M19 10l-9 10" ${G}/>`,
  wrenchc: `${wrench}<path d="M14 7h3" stroke="#a33" stroke-width="4"/><path d="M17 7h3" stroke="#3a3" stroke-width="4"/><path d="M20 7h4" stroke="#35b" stroke-width="4"/>`,
  sws: `${rainbow(2, 13, 14, 13)}<circle cx="18" cy="13" r="9" fill="#ccc"/><text x="10" y="16" font-size="8" font-weight="bold" fill="#333">SWS</text>`,
  fade: `<rect x="4" y="9" width="8" height="12" ${BR}/><rect x="15" y="10" width="9" height="12" ${BR}/><path d="M12 6v16h8z" ${OF}/>`,
  chain: `<g ${BR}><rect x="3" y="4" width="9" height="8"/><rect x="17" y="4" width="7" height="8"/><rect x="3" y="16" width="8" height="8"/><rect x="16" y="17" width="8" height="8"/></g><path d="M4 24l6-4m2-5l-3 3q-2 3 1 4 2 0 6-5M16 15l4-3q2-3 0-4-3-1-6 3l-2 3M19 8l6-4" stroke="#ddd" stroke-width="2"/>`,
  hand: `<g ${BR}><rect x="4" y="4" width="4" height="4"/><rect x="11" y="4" width="4" height="4"/><rect x="18" y="4" width="4" height="4"/><rect x="4" y="12" width="4" height="4"/></g><rect x="11" y="11" width="5" height="5" ${O}/><rect x="19" y="11" width="4" height="4" fill="#dda030"/><path d="M14 14v7l-3-2 4 7h6l2-7-6-2v-4z" fill="#ddd"/>`,
  envmove: `${nodes(7, 4)}<path d="M5 8l-3 2 3 3zM24 8l3 2-3 3zM5 19l-3 2 3 3zM24 19l3 2-3 3z" fill="#ccc"/><rect x="8" y="18" width="13" height="6" ${BR}/>`,
  magnet,
  ripple1: stripes(4, 5, 7, 5, '#8a5050') + '<path d="M12 12l4 3-4 3z" fill="#ddd"/><rect x="18" y="8" width="7" height="13" fill="#603838" stroke="#9a6a6a"/>',
  ripple2: '<rect x="4" y="8" width="7" height="13" fill="#603838" stroke="#9a6a6a"/><path d="M12 12l4 3-4 3z" fill="#ddd"/>' + stripes(18, 5, 7, 5, '#8a5050'),
  insert: stripes(4, 4, 21, 1, '#a06060') + stripes(4, 14, 21, 3, '#c89030') + '<path d="M14 17V9M11 11l3.500-4 3 4" stroke="#eee" stroke-width="2"/>',
  burst: stripes(4, 13, 12, 3, '#9a5a5a') + '<path d="M16 3l2 4 5-2-1 5 4 3-5 1 1 5-4-3-4 3v-5l-5-1 4-3-2-4 4 1z" fill="#c83030"/>',
  listx: stripes(4, 5, 16, 5, '#8a5050') + '<path d="M4 15h14" stroke="#d02020" stroke-width="3"/>' + cross(18, 11),
  steps: '<g fill="#7a4050" stroke="#c0a0a0"><rect x="3" y="4" width="11" height="5"/><rect x="9" y="10" width="11" height="5"/><rect x="16" y="18" width="9" height="6"/></g><path d="M4 12q0 9 7 10M8 18l4 4-4 3" stroke="#fff" stroke-width="2"/>',
  reccheck: `<circle cx="8" cy="9" r="4" stroke="#905050" stroke-width="2"/><path d="M11 19l4 6 8-13" stroke="#c8a060" stroke-width="3"/>`,
  recx: `<circle cx="8" cy="9" r="4" stroke="#905050" stroke-width="2"/><circle cx="8" cy="9" r="1" fill="#c05050"/>${cross(16, 17)}`,
  locklist: `<rect x="3" y="13" width="13" height="10" ${GF}/><path d="M6 13v-3q4-6 7 0v3" stroke="#b4b4b4" stroke-width="2"/>${checks(20)}`,
  unlock: `<rect x="6" y="14" width="15" height="10" ${GF}/><path d="M7 11q0-4 5-4t6 4v3" stroke="#b4b4b4" stroke-width="2.500"/>`,
  snow,
  snowx: snow + cross(17, 17),
  sx: `<rect x="5" y="10" width="13" height="14" fill="#a0a040"/><text x="8" y="21" font-size="11" font-weight="bold" fill="#333">S</text>${cross(16, 5)}`,
  mx: `<rect x="5" y="10" width="13" height="14" fill="#a86060"/><text x="7" y="21" font-size="11" font-weight="bold" fill="#700">M</text>${cross(16, 5)}`,
  balls: '<circle cx="9" cy="15" r="5" fill="#bbb"/><circle cx="20" cy="15" r="5" fill="#bbb"/><path d="M7 14l3-1 1 4zM18 14l3-1 1 4z" fill="#222" stroke="#222"/>',
  midi: '<rect x="5" y="9" width="19" height="5" fill="#a05050"/><rect x="5" y="14" width="19" height="8" fill="#ccc"/><path d="M8 14v8M11 14v8M14 14v8M17 14v8M20 14v8M5 11h19" stroke="#633"/>',
  clock: `<circle cx="14" cy="15" r="10" ${G}/><path d="M14 8v7l4 5" ${G}/>`,
  hourglass: `<path d="M9 6h11M9 24h11M11 6q0 6 3.500 9Q11 18 11 24M18 6q0 6-3.500 9Q18 18 18 24" ${G}/><path d="M12 22h5l-2.500-4zM12 10h5l-2.500 3z" ${GF}/>`,
  stripes: stripes(4, 6, 21, 5, '#8a5055'),
  headphones: `<path d="M6 20v-6q1-8 8-8t8 8v6" ${G}/><rect x="5" y="16" width="5" height="9" rx="2" ${GF}/><rect x="18" y="16" width="5" height="9" rx="2" ${GF}/>`,
  arrowsheet: `${sheet}<path d="M12 7v9M8 13l4 5 4-5z" ${O}/>`,
  palettelist: palette(3, 7) + checks(20),
  q: '<text x="5" y="23" font-size="24" font-family="Liberation Serif" font-weight="bold" fill="#b03838">Q</text>',
  quant: '<g fill="#8898b0"><path d="M4 9h6v4H4zM12 13h6v4h-6zM8 18h6v4H8zM18 9h5v4h-5zM17 20h6v4h-6z"/></g><path d="M20 3v4M24 3v4M20 5h4" stroke="#ccc"/>',
  zooma: '<rect x="4" y="7" width="15" height="12" stroke="#999" stroke-dasharray="2 1"/><path d="M7 10h5v3H7zM12 14h4v2h-4z" fill="#5080a0"/><circle cx="19" cy="18" r="4" stroke="#c04040" stroke-width="2"/><path d="M22 21l4 4" stroke="#c04040" stroke-width="2"/>',
  zoomb: '<rect x="4" y="7" width="15" height="12" stroke="#999" stroke-dasharray="2 1"/><path d="M7 10h5v3H7zM12 14h4v2h-4z" fill="#a05050"/><circle cx="19" cy="18" r="4" stroke="#c04040" stroke-width="2"/><path d="M22 21l4 4" stroke="#c04040" stroke-width="2"/>',
  keys: '<rect x="5" y="6" width="19" height="18" fill="#c0c0c0"/><path d="M10 6v18M15 6v18M20 6v18" stroke="#333"/><path d="M10 6v10M15 6v10M20 6v10" stroke="#222" stroke-width="3"/>',
  drum: `<ellipse cx="14" cy="11" rx="9" ry="3" fill="#ddd"/><path d="M5 12v7q9 7 18 0v-7q-9 6-18 0z" ${GF}/><path d="M8 14v8M14 16v8M20 14v8" stroke="#444"/>`,
  conga: `<ellipse cx="14" cy="8" rx="7" ry="3" fill="#ddd" stroke="#444"/><path d="M7 10l1 14q6 4 12 0l1-14q-7 4-14 0z" ${GF}/><path d="M11 14v11M17 14v11" stroke="#444"/>`,
  invader: '<path d="M8 5h2v3h8V5h2v3h2v4h3v8h-2v-4h-2v5h-3v3h-3v-3h-3v3H9v-3H7v-5H5v4H3v-8h3V8h2z" fill="#c0c0c0"/><path d="M9 11h3v3H9zM16 11h3v3h-3z" fill="#222"/>',
  noteud: note(7, 7) + `<path d="M20 8v15M17 11l3-4 3 4M17 20l3 4 3-4" stroke="#c8a050" stroke-width="1.500"/>`,
  noteu: note(7, 7) + `<path d="M20 17V7M17 10l3-4 3 4" stroke="#c8a050" stroke-width="2"/>`,
  noted: note(7, 5) + `<path d="M20 14v10M17 21l3 4 3-4" stroke="#c8a050" stroke-width="2"/>`,
  octu: note(5, 6) + `<path d="M17 14V6M14 9l3-4 3 4" stroke="#c8a050" stroke-width="2"/><text x="12" y="25" font-size="9" font-style="italic" fill="#bbb">8va</text>`,
  octd: note(5, 6) + `<path d="M17 16v8M14 21l3 4 3-4" stroke="#c8a050" stroke-width="2"/><text x="12" y="11" font-size="9" font-style="italic" fill="#bbb">8va</text>`,
  rainnote: rainbow(3, 5, 12, 10) + note(17, 8),
  rainff: rainbow(3, 5, 12, 10) + '<text x="8" y="23" font-size="19" font-family="Liberation Serif" font-style="italic" font-weight="bold" fill="#ccc">ff</text>',
  rainarrows: '<path d="M4 7h6M8 4l3 3-3 3M4 14h6M8 11l3 3-3 3M4 21h6M8 18l3 3-3 3" stroke="#b09070" stroke-width="1.500"/>' + rainbow(13, 9, 12, 11),
  pencil: '<rect x="6" y="12" width="12" height="12" stroke="#888" stroke-dasharray="2 1"/><path d="M9 16h6v4H9z" fill="#88a8c8"/><path d="M18 12l6-8" stroke="#c8a050" stroke-width="3"/>',
  paletteinfo: palette(3, 10) + info(20, 9),
  fxchain: '<rect x="3" y="10" width="22" height="8" fill="#777"/><text x="8" y="17" font-size="8" font-weight="bold" fill="#333">FX</text><text x="2" y="25" font-size="7" fill="#999">CHAIN</text>',
  inputfx: '<rect x="3" y="6" width="22" height="18" fill="#b88a48"/><text x="4" y="14" font-size="7" font-weight="bold" fill="#402800">INPUT</text><text x="9" y="22" font-size="7" font-weight="bold" fill="#402800">FX</text>',
  wavein: `<path d="M3 19h3l1-4 2 9 2-5 2 6 2-4h3" ${G}/><circle cx="16" cy="9" r="5" ${G}/><path d="M20 13l5 5" ${G}/><path d="M14 9h4M16 7v4" stroke="#c8a050" stroke-width="1.500"/>`,
  waveout: `<path d="M3 19h3l1-4 2 9 2-5 2 6 2-4h3" ${G}/><circle cx="16" cy="9" r="5" ${G}/><path d="M20 13l5 5" ${G}/><path d="M14 9h4" stroke="#c05050" stroke-width="1.500"/>`,
  pick,
  tools: `<path d="M14 4v5M14 9l-3 4 3 13 3-13zM8 6v5l-4 3v4l4 4M20 6v5l4 3v4l-4 4M11 13l-3-2M17 13l3-2" stroke="#b4b4b4" stroke-width="2"/>`,
  pickout: `<g transform="translate(-2 -3) scale(.75)">${pick}</g>${disk}<path d="M5 20q5 4 10 2" ${O}/>`,
  pickin: `<g transform="translate(-2 0) scale(.75)">${pick}</g>${disk}<path d="M16 7q5-3 9 2" stroke="#a07040" stroke-width="2"/>`,
  mushroom: '<path d="M6 10q2-5 8-5t8 5q1 3-5 3v2h3v2h-3v4q6 0 6 3l-9 2-9-2q0-3 6-3v-4H8v-2h3v-2q-6 0-5-3z" fill="#b83038"/>',
  midisheet: `${sheet}<path d="M8 10h3M8 13h3M13 8v10M16 8v10M19 8v10M22 8v10" stroke="#ccc" stroke-dasharray="2 1"/>`,
  listsheet: `${sheet}<rect x="10" y="9" width="11" height="8" fill="#ddd"/><path d="M11 11h9M11 13h9M11 15h9" stroke="#444"/>`,
  mixsheet: `${sheet}<path d="M8 9h14M8 13h14M10 17h12" stroke="#ccc"/><path d="M17 7v4M13 11v4M18 15v4" stroke="#eee" stroke-width="2"/>`,
  wavestrip: '<rect x="4" y="5" width="21" height="20" fill="#5a5a5a"/><path d="M8 8l4 3-4 3zM14 9h8M14 12h8" fill="#222" stroke="#222"/><path d="M5 19h3v-2 4h3v-3 5h3v-4 3h4v-3 2h5" stroke="#222"/>'
};
const chips = '<path d="M3 12h4v5H3z" fill="#b05050"/><path d="M9 12h4v5H9z" fill="#60a050"/><path d="M15 12h4v5h-4z" fill="#b0a040"/><path d="M21 12h4v5h-4z" fill="#6080c0"/>';
icons.one = chips + '<text x="4" y="26" font-size="8" fill="#ddd">ONE</text>';
icons.all = chips + '<text x="6" y="26" font-size="8" fill="#ddd">ALL</text>';

// "name" is an icon, "name*" is pressed, "'A_B" is a text label, "#hex" a colour swatch, "|" starts a group
function fillToolbar(id, spec) {
  const html = spec.split('|').map(group => '<div class="group">' + group.trim().split(/\s+/).map(name => {
    const on = name.endsWith('*') ? ' on' : '';
    name = name.replace('*', '');
    if (name[0] === '#') {
      return `<button class="tool" aria-label="Couleur ${name}"><span class="swatch" style="background:${name}"></span></button>`;
    }
    if (name[0] === "'") {
      return `<button class="tool${on}${on ? ' lit' : ''}">${name.slice(1).replace('>', '&gt;').replace('_', '<br>')}</button>`;
    }
    return `<button class="tool${on}" aria-label="${name}"><svg viewBox="0 0 28 29">${icons[name]}</svg></button>`;
  }).join('') + '</div>').join('');
  document.getElementById(id).innerHTML = html;
}

fillToolbar('mainToolbar', `metronome clockenv speaker* keyboard | radiation mixer* mask screen | play* down | grid* star | eye |
  docsearch zoomsel zoomall zoomrec zoomitem | marker markerinfo markerlist markeredit | vmarker | region regioninfo regioncolor |
  #ad4a4a #a8694c #a87c48 #9c8c3a #94903c #86964a #6b9440 #4c9450 #4f9a88 #4a86a0 #4a74a8 #4566b0 #7650a0 #8a50a8 #a84c90 #b04c84 #b0b0b0 #4a4a4a |
  'GRD_1-16 'GRD_SWS one all brush rainred rainyel | rainx x | wrenchc sws`);
fillToolbar('trackToolbar', `fade* chain* hand envmove magnet ripple1 ripple2 insert burst listx steps* reccheck |
  locklist unlock snow snowx sx mx balls midi clock hourglass stripes recx`);
fillToolbar('floatRow1', `radiation | 'Sync headphones arrowsheet 'Track_List 'Medi_Item palettelist envmove | grid magnet q quant |
  zooma zoomb | keys drum conga invader | noteud | noteu noted`);
fillToolbar('floatRow2', `octu octd | rainnote rainff rainarrows | pencil | 'VEL 'Pich_BND 'MOD_WHL 'After_TCH 'SUS_PED 'CC_71 |
  paletteinfo | '1 '1/2 '1/4 '1/8 '1/16 '1/32 | '1/3 '1/6`);
fillToolbar('sideToolbar', `fxchain inputfx | wavein waveout | pick tools pickout pickin mushroom | midisheet 'Take 'Lane* 'REC_Auto |
  listsheet wavestrip 'Loop_OBJ 'SRC_Lght 'Loop_SEC | mixsheet 'TCP_MCP 'BLK 'SEP | 'Sym_Pan 'G>D 'D>G | 'Split 'Merg`);

// ---------- track panel ----------
const power = '<svg viewBox="0 0 10 10"><path d="M3 2a4 4 0 1 0 4 0M5 1v4"/></svg>';
const envIcon = '<svg viewBox="0 0 14 12"><path d="M1 9h2l4-5h2l4 4" stroke-width="1.500"/></svg>';

const tracks = [
  { cut: true, bg: '#800000' },
  { num: 12, name: 'Frude', pan: '20%R', input: 'Left', angle: 40, bg: 'linear-gradient(#b41818, #d81c1c 40%, #8c0404 60%, #700000)' },
  { num: 13, name: 'Eurg', pan: '16%L', input: 'Right', angle: -30, bg: '#c69ee8', selected: true },
  { env: 'Pannoramique', value: '16%L', pos: 42 },
  { env: 'Envoi : Volume: Desert', value: '-inf dB', pos: 0 },
  { env: 'Envoi : Volume: Baïkonour', value: '-24.0dB', pos: 31 },
  { num: 14, name: 'Berde', pan: '35%R', input: 'Entrée 6', angle: 60, bg: 'linear-gradient(#35788a, #3888a2 35%, #22586a 70%, #1c4c5a)' },
  { num: 15, name: 'Plaude', pan: '34%L', input: 'Entrée 6', angle: -60, bg: 'linear-gradient(#8c5a5a, #a06468 35%, #6c4040 70%, #603636)' },
  { num: 16, name: 'John', pan: '15%L', input: 'Entrée 6', angle: -30, bg: 'linear-gradient(#1a5090, #2064ac 35%, #0c3464)' }
];

document.getElementById('trackList').innerHTML = tracks.map(t => {
  if (t.cut) {
    return `<div class="track cut"><div class="track-body" style="background:${t.bg}"></div><div class="track-meter"></div><div class="track-num"></div></div>`;
  }
  if (t.env) {
    return `<div class="envelope"><div class="env-body">
      <div class="env-top"><button class="rec" aria-label="Armer ${t.env}"></button><input class="env-name" aria-label="Enveloppe" value="${t.env}"><span>${t.value}</span></div>
      <div class="env-bottom"><div class="env-slider"><input type="range" class="fader-h" aria-label="${t.env}" value="${t.pos}"></div>
      <button class="env-power" aria-label="Activer">${power}</button><button class="env-shape" aria-label="Forme"><svg viewBox="0 0 25 16"><path d="M5 11h2l4-5 5 5" stroke-width="1.500"/><path d="M17 10h5l-2.500 3z" fill="#222"/></svg></button></div>
    </div><div class="env-side"><svg viewBox="0 0 14 12"><path d="M1 10h3l3-7 3 3h3" stroke-width="1.500"/></svg></div></div>`;
  }
  return `<div class="track${t.selected ? ' selected' : ''}">
    <div class="track-body" style="background:${t.bg}">
      <div class="row row1"><button class="rec" aria-label="Armer ${t.name}"></button><input class="track-name" aria-label="Nom de piste" value="${t.name}"><button class="track-io">I/O</button>
        <button class="track-fx"><span>F X</span>${power}</button><button class="ms">M</button><button class="ms">S</button></div>
      <div class="row row2"><div class="track-fader"><input type="range" class="fader-h" aria-label="Volume ${t.name}" value="76"><span>0.00</span></div>
        <div class="pan-knob"><svg viewBox="0 0 16 16"><path d="M8 6V2" transform="rotate(${t.angle} 8 8)"/></svg></div><div class="pan-value">${t.pan}</div></div>
      <div class="row row3"><button class="read">${envIcon}READ</button><button class="phase">Ø</button>
        <div class="select-wrap"><select class="input-select" aria-label="Entrée ${t.name}"><option>${t.input}</option></select></div>
        <button class="monitor" aria-label="Monitoring">▶</button><button class="inout">IN<i>OUT</i></button></div>
    </div>
    <div class="track-meter"><div><span>-inf</span><span>-18-</span><span>-30-</span><span>-42-</span><span>-54-</span></div></div>
    <div class="track-num"><b>${t.num}</b></div>
  </div>`;
}).join('');

// ---------- arrange ----------
const major = 127.65;   // px for 10 seconds
const origin = 83.5;    // x of 11:00.00

let ruler = '';
for (let i = -1; i < 13; i++) {
  const x = origin + i * major;
  const sec = 660 + i * 10;
  ruler += `<path d="M${x} 15v30" stroke="#777"/><path d="M${x + major / 2} 37v8" stroke="#777"/>`;
  for (let k = 1; k < 20; k++) {
    ruler += `<path d="M${x + k * major / 20} 43v2" stroke="#777"/>`;
  }
  ruler += `<text x="${x + 5}" y="25">${Math.floor(sec / 60)}:${String(sec % 60).padStart(2, '0')}.00</text>`;
}
document.getElementById('ruler').innerHTML = ruler;

let lines = '';
for (let x = origin - 3 * major / 5; x < 2400; x += major / 5) {
  lines += `<path d="M${Math.round(x) + 0.5} 0v1200"/>`;
}
document.getElementById('gridLines').innerHTML = lines;

let seed = 7;
function rnd() {
  seed = (seed * 16807) % 2147483647;
  return seed / 2147483647;
}

// mirrored peaks that follow a coarse amplitude list
function wave(w, amps, fill, stroke, key) {
  seed = 1000 + key * 3700;
  const top = [], bottom = [];
  for (let x = 0; x <= w; x++) {
    const p = x / w * (amps.length - 1);
    const i = Math.min(Math.floor(p), amps.length - 2);
    const a = amps[i] + (amps[i + 1] - amps[i]) * (p - i);
    const spike = x % 3 === 0 ? 0.75 + rnd() * 0.45 : 0.3 + rnd() * 0.35;
    top.push(`${x} ${(28 - Math.min(a * spike, 1) * 27).toFixed(1)}`);
    bottom.unshift(`${x} ${(28 + Math.min(a * (spike * 0.8 + rnd() * 0.25), 1) * 27).toFixed(1)}`);
  }
  return `<path d="M${top.join('L')}L${bottom.join('L')}z" fill="${fill}" stroke="${stroke}" stroke-width=".8"/>`;
}

const RED = ['#800404', '#400000'], VIOLET = ['#9a68cc', '#4c3068'], CYAN = ['#28a8cc', '#14586c'], ROSE = ['#e87878', '#a04040'];
const eurg = [
  { x: 365, w: 14, amps: [0.2, 0.6, 0.8, 0.3], fade: 1 },
  { x: 379, w: 32, amps: [0.1, 1, 0.1, 0.05, 0.8, 1, 1, 1, 0.8, 0.1], fade: 1 },
  { x: 433, w: 52, amps: [0.4, 0.5, 0.6, 0.65, 0.6, 0.4, 0.25, 0.3, 0.5, 0.2, 0.1], fade: 1 },
  { x: 485, w: 85, amps: [0.4, 0.5, 0.4, 0.45, 0.4, 0.6, 1, 0.5, 0.5, 0.8, 0.4, 0.1, 0.4, 0.6, 0.4, 0.3, 0.05], fade: 1 },
  { x: 620, w: 122, amps: [0.5, 0.9, 0.6, 1, 1, 0.4, 0.7, 0.5, 0.8, 0.7, 0.4, 0.5, 0.7, 1, 0.4, 0.7, 0.9, 0.6, 0.7, 0.9, 0.5, 0.4], fade: 1 },
  { x: 825, w: 70, amps: [0.1, 0.3, 0.5, 0.7, 0.8, 0.4, 0.7, 0.9, 0.3, 0.2, 0.6, 0.4, 0.1] },
  { x: 895, w: 33, amps: [0.4, 0.7, 1, 0.6, 0.6, 0.7, 0.4] },
  { x: 928, w: 27, amps: [0.6, 0.9, 0.1, 0.1, 0.5, 0.4] }
];
const lanes = [
  { cut: true },
  { color: RED, clips: [
    { x: 300, w: 66, amps: [0.5, 0.75, 0.45, 0.5, 0.4, 0.5, 0.1, 0.75, 0.8, 0.5, 0.4], fade: 1 },
    { x: 565, w: 59, amps: [1, 0.8, 0.2, 0.1, 0.9, 0.9, 0.6, 0.1, 1, 0.6, 0.8], fade: 1 },
    { x: 953, w: 53, amps: [0.2, 0.8, 0.5, 1, 0.7, 0.1, 0.9, 1, 0.5, 0.2], fade: 1 }],
    labels: [[301, 'lm', '[+6....'], [566, 'lm', '[+6...'], [955, 'lm', '[+...']] },
  { color: VIOLET, clips: eurg,
    labels: [[379, 'lm'], [435, 'lmk'], [487, 'lmk', '[+9.9...'], [623, 'lm', "[+9.93dB] D'apr..."], [827, 'lmk', '[+...'], [895, 'lm'], [929, 'l']] },
  { env: 'orange' }, { env: 'red' }, { env: 'red' },
  { color: CYAN, clips: [
    { x: 233, w: 13, amps: [0.9, 0.6, 0.5, 0.2], fade: 1 },
    { x: 246, w: 16, amps: [0.2, 0.7, 0.5, 0.6] },
    { x: 742, w: 27, amps: [0.8, 0.9, 0.5, 0.9, 0.6], fade: 1 },
    { x: 769, w: 26, amps: [0.5, 0.8, 0.6, 1, 0.5], fade: 1 },
    { x: 795, w: 14, amps: [0.8, 0.4, 0.8, 0.3], fade: 1 }],
    labels: [[246, 'l'], [743, 'l'], [769, 'l']] },
  { color: ROSE, clips: [{ x: 261, w: 42, amps: [0.4, 0.9, 0.7, 1, 0.5, 0.8, 0.9, 0.5], fade: 1 }],
    labels: [[262, 'lm']] },
  { color: CYAN, clips: [
    { x: 1176, w: 37, amps: [0.4, 0.5] }, { x: 1233, w: 19, amps: [0.4, 0.5], fade: 1 }, { x: 1252, w: 28, amps: [0.4, 0.5] }],
    labels: [[1178, 'lm'], [1235, 'l'], [1253, 'l']] }
];
const badge = {
  l: '<i><svg viewBox="0 0 13 13"><path d="M3 6h7v5H3z" fill="#888"/><path d="M4 6V4q2-3 5 0v2" fill="none" stroke="#888" stroke-width="1.500"/></svg></i>',
  m: '<i>M</i>',
  k: '<i class="link"><svg viewBox="0 0 13 13"><path d="M6 6q-4 0-3-3 4-2 4 2v3q0 4 3 2 1-3-2-3" fill="none" stroke="#ffe8a0" stroke-width="1.500"/></svg></i>'
};

document.getElementById('lanes').innerHTML = lanes.map(lane => {
  if (lane.cut) return '<div class="lane cut"></div>';
  if (lane.env) {
    return '<div class="lane env">' + eurg.map((c, i) =>
      `<div class="ghost" style="left:${c.x}px;width:${c.w}px"><svg viewBox="0 0 ${c.w} 56" preserveAspectRatio="none">${wave(c.w, c.amps, '#a6a6a6', 'none', i)}</svg></div>`).join('') +
      `<div class="env-line ${lane.env}"></div></div>`;
  }
  return '<div class="lane">' + lane.clips.map((c, i) => {
    let dashed = '';
    for (let x = origin - 3 * major / 5; x < c.x + c.w; x += major / 5) {
      if (x > c.x) dashed += `<path d="M${Math.round(x) - c.x} 0v56" stroke="#fff6" stroke-dasharray="2 2"/>`;
    }
    return `<div class="clip${c.fade ? ' fade' : ''}" style="left:${c.x}px;width:${c.w}px"><svg viewBox="0 0 ${c.w} 56" preserveAspectRatio="none">
      ${wave(c.w, c.amps, lane.color[0], lane.color[1], i)}${dashed}<path d="M0 49l6 7H0z" fill="#fff"/></svg></div>`;
  }).join('') + lane.labels.map(l =>
    `<div class="clip-label" style="left:${l[0]}px">${[...l[1]].map(k => badge[k]).join('')}${l[2] ? `<span>${l[2]}</span>` : ''}</div>`).join('') + '</div>';
}).join('');

// ---------- mixer ----------
const FX = ['ReaPitch', 'ReaEQ', 'ReaComp'];
const strips = [
  { num: 1, name: 'Musiques', folder: true, db: '-4.48', fader: 68, track: 'yellow', pan: '#5a5a28' },
  { num: 2, name: 'Soundtrac..1', head: '#3a1e5e', a: '#7346a8', b: '#2f1254', fx: [], low: true },
  { num: 3, name: 'Soundtrac..2', head: '#321656', a: '#6c3eac', b: '#2a0e50', fx: [], low: true },
  { num: 4, name: 'Soundtrac..3', head: '#28104c', a: '#6836a4', b: '#220a46', fx: [], low: true },
  { num: 5, name: 'Soundtrac..4', head: '#28104c', a: '#6836a4', b: '#220a46', fx: [], low: true },
  { num: 6, name: 'Voix', folder: true, db: '0.00', fader: 82, pan: '#1c1c1c' },
  { num: 7, name: 'Générique', head: '#40223c', a: '#8c5282', b: '#381c34', fx: ['ReaEQ', '-ReaComp'] },
  { num: 8, name: 'Annonce', head: '#3a2456', a: '#7c54a8', b: '#301e4a', fx: ['ReaFir', 'ReaPitch', 'ReaEQ'], more: true },
  { num: 9, name: 'Narrateur', head: '#540c46', a: '#a8247e', b: '#480a3c', fx: FX, fader: 85 },
  { num: 10, name: 'Zawn', head: '#080850', a: '#2424d0', b: '#060648', fx: FX, pan: '#28508c' },
  { num: 11, name: 'Krilg', head: '#680000', a: '#f42424', b: '#6c0000', fx: FX, p: -21, pan: '#90482c' },
  { num: 12, name: 'Frude', head: '#560000', a: '#ec2020', b: '#4c0000', fx: FX, p: 20, pan: '#7c401c' },
  { num: 13, name: 'Eurg', head: '#3c2c54', a: '#e8bcfc', b: '#dab4fa', fx: FX, p: -16, pan: '#929292', selected: true },
  { num: 14, name: 'Berde', head: '#143e46', a: '#3a86a0', b: '#123a42', fx: FX, p: 35, pan: '#347c60' },
  { num: 15, name: 'Plaude', head: '#502e2e', a: '#a4686a', b: '#4c2e2c', fx: FX, p: -34, pan: '#6a6c4c' },
  { num: 16, name: 'John', head: '#042448', a: '#1e64ac', b: '#021e40', fx: FX, p: -15, pan: '#186060' },
  { num: 17, name: 'Jack', head: '#543428', a: '#a4745c', b: '#4c3028', fx: FX, p: 15, pan: '#607850' },
  { num: 18, name: 'Chancelier', head: '#203800', a: '#609c20', b: '#1c3400', fx: FX, pan: '#3c8c3c', track: 'green' },
  { num: 19, name: 'Ferguson', head: '#520e54', a: '#a830a4', b: '#480a4a', fx: ['ReaPitch', '-ReaEQ', '-ReaComp'], more: true },
  { num: 20, name: 'Gaylord', head: '#302240', a: '#6c5490', b: '#2c1e3e', fx: FX, p: -21, pan: '#44705c', track: 'green' },
  { num: 21, name: 'Sélenographe', head: '#484a08', a: '#9c9c28', b: '#404004', fx: FX, p: -20, pan: '#646820', track: 'green', long: true },
  { num: 22, name: 'Moon Magasin', head: '#560840', a: '#b42c88', b: '#4c063a', fx: FX, p: 20, track: 'green', long: true },
  { num: 23, name: 'Appolo Timer', head: '#4c2e00', a: '#bc8020', b: '#482a00', fx: FX, p: -35, track: 'green', long: true },
  { num: 24, name: 'Brume Grise', head: '#2a1258', a: '#7038bc', b: '#280e54', fx: FX, long: true }
];
const scale = '<div class="scale"><span>-inf</span><span>-6-</span><span>-18-</span><span>-30-</span><span>-42-</span><span>-54-</span></div>';

document.getElementById('strips').innerHTML = strips.map(s => {
  const p = s.p || 0;
  const label = p ? Math.abs(p) + '%' + (p > 0 ? 'R' : 'L') : 'Centre';
  const panInput = `<input type="range" class="pan" aria-label="Pan ${s.name}" min="-100" max="100" value="${p}">`;
  if (s.folder) {
    return `<div class="strip folder" style="--head:#333;--pan:${s.pan}">
      <div class="strip-head"><div class="strip-io"><button class="fx-btn">${power}<span>F X</span></button>
        <div class="folder-io"><button><small>MASTER<br>RCV SND</small>I/O</button><button class="input-fx">INPUT FX</button></div></div>
        <div class="select-wrap"><select class="input-select" aria-label="Entrée ${s.name}"><option>Left</option></select></div>
        <div class="strip-name">${s.name}</div></div>
      <div class="strip-main">${panInput}<div class="pan-label">Centre</div>
        <div class="folder-box"><input type="range" class="fader-v ${s.track || ''}" aria-label="Volume ${s.name}" value="${s.fader}">${scale}
          <button class="rec" aria-label="Armer"></button><em>${s.db}</em></div>
        <div class="folder-buttons"><button class="ms">M</button><button class="ms">S</button><button class="phase">Ø</button></div></div>
      <div class="strip-num"><button class="dot" aria-label="Dossier">▶</button><span>${s.num}</span></div>
    </div>`;
  }
  const slots = s.fx.map(f => `<button class="slot${f[0] === '-' ? ' off' : ''}">${f.replace('-', '')}</button>`).join('');
  return `<div class="strip${s.selected ? ' selected' : ''}" style="--head:${s.head};--main:linear-gradient(${s.a}, ${s.b} 90%);--pan:${s.pan || '#0004'}">
    <div class="strip-head"><div class="slots">${slots}${s.more ? '<button class="slot more">▼</button>' : ''}</div>
      <div class="strip-io"><button class="fx-btn${s.fx.length ? '' : ' off'}">${power}<span>F X</span></button>
        <button class="io-box"><b>MASTER</b><b><i>RCV</i> SND</b>I / O</button></div>
      <div class="strip-name${s.long ? ' long' : ''}">${s.name}</div></div>
    <div class="strip-main">${panInput}<div class="pan-label">${label}</div>
      <div class="strip-body">
        <svg class="fader-shape" viewBox="0 0 54 130"><path d="M3 1H32q3 0 3 3V97c0 9 17 4 17 20a11 11 0 0 1-11 11H3q-2 0-2-2V3q0-2 2-2z" fill="#1b1b1b" stroke="#0a0a0a" stroke-width="2"/><path d="M2 129H41q9 0 11-8" fill="none" stroke="#fff6"/></svg>
        <input type="range" class="fader-v ${s.track || ''}" aria-label="Volume ${s.name}" value="${s.fader || (s.low ? 73 : 82)}">${scale}
        <div class="strip-buttons"><button class="ms">M</button><button class="ms">S</button><button class="monitor" aria-label="Monitoring">▶</button>
          <button class="env-btn" aria-label="Automation">${envIcon}</button><button class="phase">Ø</button><button class="rec" aria-label="Armer"></button></div>
      </div></div>
    <div class="strip-num"><span>${s.num}</span></div>
  </div>`;
}).join('');
```
